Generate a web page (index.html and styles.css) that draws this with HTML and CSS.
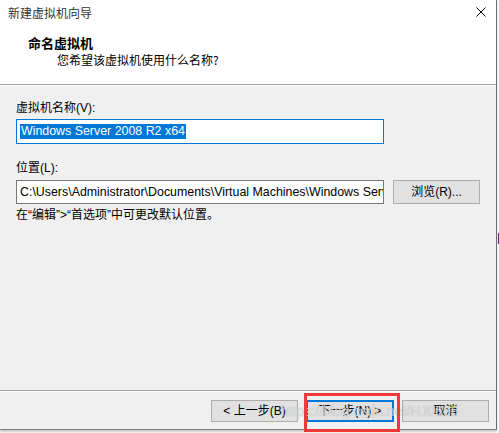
FILE: index.html
```html
<!DOCTYPE html>
<html lang="zh-CN">
<head>
<meta charset="utf-8">
<title>新建虚拟机向导</title>
<link rel="stylesheet" href="styles.css">
</head>
<body>
<div class="window">
  <div class="header">
    <div class="titlebar">
      <span class="title">新建虚拟机向导</span>
      <svg class="close" width="10" height="10" viewBox="0 0 10 10"><path d="M0.5 0.5 L9.5 9.5 M9.5 0.5 L0.5 9.5" stroke="#000" stroke-width="1" fill="none"/></svg>
    </div>
    <div class="heading">
      <div class="h-title">命名虚拟机</div>
      <div class="h-sub">您希望该虚拟机使用什么名称?</div>
    </div>
  </div>
  <div class="content">
    <div class="label">虚拟机名称(V):</div>
    <div class="input focused"><span class="sel">Windows Server 2008 R2 x64</span></div>
    <div class="label label-loc">位置(L):</div>
    <div class="row">
      <div class="input path"><span class="path-text">C:\Users\Administrator\Documents\Virtual Machines\Windows Server 2008 R2 x64</span></div>
      <div class="btn browse">浏览(R)...</div>
    </div>
    <div class="note">在“编辑”&gt;“首选项”中可更改默认位置。</div>
  </div>
  <div class="footer">
    <div class="btn">&lt; 上一步(B)</div>
    <div class="btn default">下一步(N) &gt;</div>
    <div class="btn cancel">取消</div>
  </div>
</div>
<div class="mark"></div>
<div class="watermark">https://blog.csdn.net/HJ0696</div>
</body>
</html>
```
FILE: styles.css
```css
html, body {
  margin: 0;
  padding: 0;
  background: #ffffff;
}
body {
  width: 499px;
  height: 433px;
  overflow: hidden;
  position: relative;
  font-family: "Liberation Sans", "Noto Sans CJK SC", sans-serif;
  font-size: 12px;
  color: #000;
}
.window {
  width: 497px;
  height: 430px;
  box-sizing: border-box;
  background: #f0f0f0;
  border-right: 1px solid #707070;
  border-bottom: 1px solid #808080;
  display: flex;
  flex-direction: column;
  box-shadow: 0 2px 2px rgba(0, 0, 0, 0.22);
}
.header {
  background: #fff;
  height: 85px;
  box-sizing: border-box;
  border-bottom: 1px solid #a0a0a0;
}
.titlebar {
  height: 25px;
  display: flex;
  align-items: center;
  justify-content: space-between;
  padding: 0 10px 0 8px;
}
.title {
  color: #333;
  font-family: "Noto Sans CJK SC", sans-serif;
  font-size: 12px;
  line-height: 16px;
}
.close {
  display: block;
  margin-top: -1px;
}
.heading {
  margin-top: 10px;
}
.h-title {
  padding-left: 28px;
  font-weight: bold;
  font-size: 13px;
  line-height: 16px;
  font-family: "Noto Sans CJK SC", sans-serif;
}
.h-sub {
  padding-left: 57px;
  line-height: 16px;
  margin-top: 1px;
  font-family: "Noto Sans CJK SC", sans-serif;
}
.content {
  flex: 1;
  border-top: 1px solid #fff;
  padding: 14px 0 0 16px;
}
.label {
  line-height: 16px;
  height: 16px;
}
.label-loc {
  margin-top: 16px;
}
.input {
  width: 368px;
  height: 25px;
  box-sizing: border-box;
  background: #fff;
  border: 1px solid #7a7a7a;
  display: flex;
  align-items: center;
  padding-left: 3px;
  overflow: hidden;
  white-space: nowrap;
  margin-top: 3px;
  font-size: 12.4px;
}
.input.focused {
  border-color: #0078d7;
}
.sel {
  background: #0078d7;
  color: #fff;
  line-height: 15px;
  padding: 0 1px;
}
.row {
  display: flex;
  align-items: flex-start;
  gap: 9px;
  margin-top: 4px;
}
.input.path {
  height: 24px;
  margin-top: 0;
}
.path-text {
  color: #000;
  flex: 1;
  min-width: 0;
  overflow: hidden;
  line-height: 16px;
}
.btn {
  width: 87px;
  height: 22px;
  box-sizing: border-box;
  background: #e1e1e1;
  border: 1px solid #adadad;
  display: flex;
  align-items: center;
  justify-content: center;
  line-height: 16px;
}
.browse {
  height: 24px;
}
.note {
  margin-top: 3px;
  line-height: 16px;
}
.footer {
  height: 39px;
  box-sizing: border-box;
  border-top: 1px solid #a0a0a0;
  box-shadow: inset 0 1px 0 #fff;
  display: flex;
  justify-content: flex-end;
  align-items: flex-start;
  padding: 9px 7px 0 0;
  gap: 8px;
}
.btn.default {
  width: 88px;
  border: 2px solid #0078d7;
}
.watermark {
  position: absolute;
  left: 281px;
  top: 402px;
  font-family: "Liberation Sans", sans-serif;
  font-size: 14px;
  line-height: 18px;
  color: rgba(232, 232, 232, 0.75);
  text-shadow: 0 0 1px rgba(110, 110, 110, 0.45);
  pointer-events: none;
}
.mark {
  position: absolute;
  left: 498px;
  top: 233px;
  width: 1px;
  height: 11px;
  background: #6a1b6e;
}
body::after {
  content: "";
  position: absolute;
  left: 304px;
  top: 393px;
  width: 96px;
  height: 39px;
  box-sizing: border-box;
  border: 3px solid #f03a3a;
}
```
